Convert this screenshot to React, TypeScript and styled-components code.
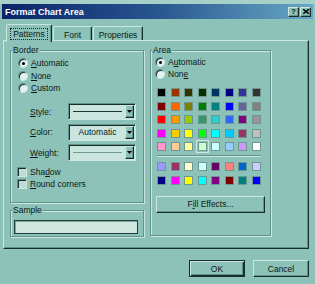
import styled, { createGlobalStyle, css } from "styled-components";

const C = {
  face: "#8dc2b8",
  hi: "#cbe7e0",
  shade: "#64918a",
  dark: "#15302b",
  field: "#cae5de",
  text: "#0b1816",
};

const GlobalStyle = createGlobalStyle`
  html, body { margin: 0; padding: 0; }
  body {
    width: 315px;
    height: 284px;
    overflow: hidden;
    background: ${C.face};
    color: ${C.text};
    font-family: "Liberation Sans", Arial, sans-serif;
    font-size: 8.5px;
  }
`;

const raised = css`
  border: 1px solid;
  border-color: ${C.hi} ${C.dark} ${C.dark} ${C.hi};
  box-shadow: inset -1px -1px 0 ${C.shade};
`;

const sunken = css`
  border: 1px solid;
  border-color: ${C.shade} ${C.hi} ${C.hi} ${C.shade};
  box-shadow: inset 1px 1px 0 ${C.dark};
`;

const Dialog = styled.div`
  width: 315px;
  height: 284px;
  box-sizing: border-box;
  border-top: 4px solid #a7d0c8;
  display: flex;
  flex-direction: column;
`;

const TitleBar = styled.div`
  height: 15px;
  margin: 0 2px;
  padding: 0 2px 0 3px;
  display: flex;
  align-items: center;
  justify-content: space-between;
  background: linear-gradient(to right, #0b236b 0%, #28568e 50%, #68a8c6 100%);
`;

const Title = styled.span`
  color: #fff;
  font-size: 9px;
  font-weight: bold;
`;

const CaptionButtons = styled.div`
  display: flex;
  gap: 1px;
`;

const CaptionButton = styled.div`
  ${raised};
  box-sizing: border-box;
  width: 11px;
  height: 10px;
  background: ${C.face};
  display: flex;
  align-items: center;
  justify-content: center;
  font-size: 8px;
  font-weight: bold;
  line-height: 1;
`;

const Body = styled.div`
  flex: 1;
  padding: 5px 6px 0 3px;
  display: flex;
  flex-direction: column;
`;

const TabStrip = styled.div`
  position: relative;
  z-index: 1;
  height: 18px;
  margin-bottom: -2px;
  padding-left: 3px;
  display: flex;
  align-items: flex-end;
  gap: 1px;
`;

const Tab = styled.div<{ $w: number; $active?: boolean }>`
  box-sizing: border-box;
  width: ${(p) => p.$w}px;
  height: ${(p) => (p.$active ? 18 : 14)}px;
  margin-bottom: ${(p) => (p.$active ? 0 : 2)}px;
  border: 1px solid;
  border-bottom: none;
  border-color: ${C.hi} ${C.dark} transparent ${C.hi};
  border-radius: 2px 2px 0 0;
  box-shadow: inset -1px 0 0 ${C.shade};
  background: ${C.face};
  display: flex;
  justify-content: center;
  padding-top: ${(p) => (p.$active ? 3 : 2)}px;
`;

const TabLabel = styled.span<{ $focus?: boolean }>`
  height: 10px;
  line-height: 10px;
  padding: 0 2px;
  border: 1px dotted ${(p) => (p.$focus ? C.dark : "transparent")};
`;

const Panel = styled.div`
  box-sizing: border-box;
  width: 306px;
  height: 209px;
  padding: 9px 0 0 6px;
  border: 1px solid;
  border-color: ${C.hi} ${C.dark} ${C.dark} ${C.hi};
  box-shadow: inset -1px -1px 0 ${C.shade};
  display: flex;
  gap: 6px;
  align-items: flex-start;
`;

const Column = styled.div`
  display: flex;
  flex-direction: column;
  gap: 7px;
`;

const Group = styled.div<{ $w: number; $h: number; $pad: string }>`
  position: relative;
  box-sizing: border-box;
  width: ${(p) => p.$w}px;
  height: ${(p) => p.$h}px;
  padding: ${(p) => p.$pad};
  border: 1px solid ${C.shade};
  box-shadow: inset 1px 1px 0 ${C.hi}, 1px 1px 0 ${C.hi};
`;

const GroupLabel = styled.span`
  position: absolute;
  top: -6px;
  left: 1px;
  padding: 0 1px;
  line-height: 11px;
  background: ${C.face};
`;

const OptionRow = styled.label<{ $h: number }>`
  height: ${(p) => p.$h}px;
  display: flex;
  align-items: center;
  gap: 3px;
`;

const RadioDot = styled.span<{ $checked?: boolean }>`
  position: relative;
  box-sizing: border-box;
  width: 10px;
  height: 10px;
  border-radius: 50%;
  border: 1px solid;
  border-color: ${C.shade} ${C.hi} ${C.hi} ${C.shade};
  box-shadow: inset 1px 1px 0 ${C.dark};
  background: #e2f2ee;

  &::after {
    content: "";
    display: ${(p) => (p.$checked ? "block" : "none")};
    position: absolute;
    left: 2.5px;
    top: 2.5px;
    width: 3px;
    height: 3px;
    border-radius: 50%;
    background: #000;
  }
`;

const CheckBox = styled.span`
  ${sunken};
  box-sizing: border-box;
  width: 10px;
  height: 10px;
  background: #c0dbd5;
`;

const FieldList = styled.div`
  margin-top: 8.5px;
  padding-left: 12px;
  display: flex;
  flex-direction: column;
  gap: 3.5px;
`;

const FieldRow = styled.div`
  height: 17px;
  display: flex;
  align-items: center;
`;

const FieldLabel = styled.span`
  width: 38px;
`;

const Combo = styled.div`
  ${sunken};
  box-sizing: border-box;
  width: 68px;
  height: 17px;
  padding: 1px;
  background: ${C.field};
  display: flex;
`;

const ComboValue = styled.div`
  flex: 1;
  display: flex;
  align-items: center;
  justify-content: center;
  padding: 0 3px;
`;

const LineSample = styled.div<{ $weight: number; $color: string }>`
  width: 100%;
  height: ${(p) => p.$weight}px;
  background: ${(p) => p.$color};
`;

const ComboArrow = styled.div`
  ${raised};
  box-sizing: border-box;
  width: 9px;
  background: ${C.face};
  display: flex;
  align-items: center;
  justify-content: center;
`;

const CheckList = styled.div`
  margin-top: 5px;
  margin-left: -1px;
`;

const SampleBox = styled.div`
  box-sizing: border-box;
  width: 124px;
  height: 14px;
  border: 1px solid #22403b;
  box-shadow: inset 1px 1px 0 #7fa7a0;
  background: #cfe6df;
`;

const Palette = styled.div`
  margin-left: 2px;
  display: grid;
  grid-template-columns: repeat(8, 9px);
  grid-auto-rows: 9px;
  gap: 4.5px;
`;

const Swatch = styled.span<{ $selected?: boolean }>`
  box-sizing: border-box;
  border: 1px solid #6f968f;
  outline: ${(p) => (p.$selected ? `1px solid ${C.hi}` : "none")};
  outline-offset: 1px;
`;

const PaletteRule = styled.div`
  width: 104px;
  height: 0;
  margin: 4px 0 5px 2px;
  border-top: 1px solid ${C.shade};
  border-bottom: 1px solid ${C.hi};
`;

const PushButton = styled.div<{ $w: number; $default?: boolean }>`
  box-sizing: border-box;
  width: ${(p) => p.$w}px;
  height: 17px;
  background: ${C.face};
  display: flex;
  align-items: center;
  justify-content: center;
  ${(p) =>
    p.$default
      ? css`
          border: 1px solid ${C.dark};
          box-shadow: inset 1px 1px 0 ${C.hi}, inset -1px -1px 0 ${C.dark},
            inset -2px -2px 0 ${C.shade};
        `
      : raised}
`;

const FillButton = styled(PushButton)`
  margin: 11px 0 0 1px;
`;

const ButtonRow = styled.div`
  margin-top: 11px;
  display: flex;
  justify-content: flex-end;
  gap: 8px;
`;

const standard = [
  ["#000000", "#993300", "#333300", "#003300", "#003366", "#000080", "#333399", "#333333"],
  ["#800000", "#ff6600", "#808000", "#008000", "#008080", "#0000ff", "#666699", "#808080"],
  ["#ff0000", "#ff9900", "#99cc00", "#339966", "#33cccc", "#3366ff", "#800080", "#969696"],
  ["#ff00ff", "#ffcc00", "#ffff00", "#00ff00", "#00ffff", "#00ccff", "#993366", "#c0c0c0"],
  ["#ff99cc", "#ffcc99", "#ffff99", "#ccffcc", "#ccffff", "#99ccff", "#cc99ff", "#ffffff"],
];

const chart = [
  ["#9999ff", "#993366", "#ffffcc", "#ccffff", "#660066", "#ff8080", "#0066cc", "#ccccff"],
  ["#000080", "#ff00ff", "#ffff00", "#00ffff", "#800080", "#800000", "#008080", "#0000ff"],
];

const Arrow = () => (
  <svg width="5" height="3" viewBox="0 0 5 3">
    <polygon points="0,0 5,0 2.5,3" fill="#000" />
  </svg>
);

const Radio = ({ checked, children }: { checked?: boolean; children: React.ReactNode }) => (
  <OptionRow $h={12.5}>
    <RadioDot $checked={checked} />
    <span>{children}</span>
  </OptionRow>
);

export default function App() {
  return (
    <>
      <GlobalStyle />
      <Dialog>
        <TitleBar>
          <Title>Format Chart Area</Title>
          <CaptionButtons>
            <CaptionButton>?</CaptionButton>
            <CaptionButton>
              <svg width="6" height="5" viewBox="0 0 6 5">
                <path d="M0 0 L6 5 M6 0 L0 5" stroke="#000" strokeWidth="1.4" />
              </svg>
            </CaptionButton>
          </CaptionButtons>
        </TitleBar>

        <Body>
          <TabStrip>
            <Tab $w={46} $active>
              <TabLabel $focus>Patterns</TabLabel>
            </Tab>
            <Tab $w={39}>
              <TabLabel>Font</TabLabel>
            </Tab>
            <Tab $w={50}>
              <TabLabel>Properties</TabLabel>
            </Tab>
          </TabStrip>

          <Panel>
            <Column>
              <Group $w={134} $h={153} $pad="6px 0 0 7px">
                <GroupLabel>Border</GroupLabel>
                <Radio checked>
                  <u>A</u>utomatic
                </Radio>
                <Radio>
                  <u>N</u>one
                </Radio>
                <Radio>
                  <u>C</u>ustom
                </Radio>
                <FieldList>
                  <FieldRow>
                    <FieldLabel>
                      <u>S</u>tyle:
                    </FieldLabel>
                    <Combo>
                      <ComboValue>
                        <LineSample $weight={1} $color="#1c3531" />
                      </ComboValue>
                      <ComboArrow>
                        <Arrow />
                      </ComboArrow>
                    </Combo>
                  </FieldRow>
                  <FieldRow>
                    <FieldLabel>
                      <u>C</u>olor:
                    </FieldLabel>
                    <Combo>
                      <ComboValue>Automatic</ComboValue>
                      <ComboArrow>
                        <Arrow />
                      </ComboArrow>
                    </Combo>
                  </FieldRow>
                  <FieldRow>
                    <FieldLabel>
                      <u>W</u>eight:
                    </FieldLabel>
                    <Combo>
                      <ComboValue>
                        <LineSample $weight={1} $color="#6f9690" />
                      </ComboValue>
                      <ComboArrow>
                        <Arrow />
                      </ComboArrow>
                    </Combo>
                  </FieldRow>
                </FieldList>
                <CheckList>
                  <OptionRow $h={12}>
                    <CheckBox />
                    <span>
                      Sha<u>d</u>ow
                    </span>
                  </OptionRow>
                  <OptionRow $h={12}>
                    <CheckBox />
                    <span>
                      <u>R</u>ound corners
                    </span>
                  </OptionRow>
                </CheckList>
              </Group>

              <Group $w={134} $h={27} $pad="9px 0 0 3px">
                <GroupLabel>Sample</GroupLabel>
                <SampleBox />
              </Group>
            </Column>

            <Group $w={121} $h={186} $pad="5px 0 0 4px">
              <GroupLabel>Area</GroupLabel>
              <OptionRow $h={12}>
                <RadioDot $checked />
                <span>
                  A<u>u</u>tomatic
                </span>
              </OptionRow>
              <OptionRow $h={12}>
                <RadioDot />
                <span>
                  Non<u>e</u>
                </span>
              </OptionRow>
              <Palette style={{ marginTop: 8 }}>
                {standard.flat().map((c, i) => (
                  <Swatch key={i} $selected={i === 35} style={{ background: c }} />
                ))}
              </Palette>
              <PaletteRule />
              <Palette>
                {chart.flat().map((c, i) => (
                  <Swatch key={i} style={{ background: c }} />
                ))}
              </Palette>
              <FillButton $w={109}>
                F<u>i</u>ll Effects...
              </FillButton>
            </Group>
          </Panel>

          <ButtonRow>
            <PushButton $w={56} $default>
              OK
            </PushButton>
            <PushButton $w={56}>Cancel</PushButton>
          </ButtonRow>
        </Body>
      </Dialog>
    </>
  );
}
